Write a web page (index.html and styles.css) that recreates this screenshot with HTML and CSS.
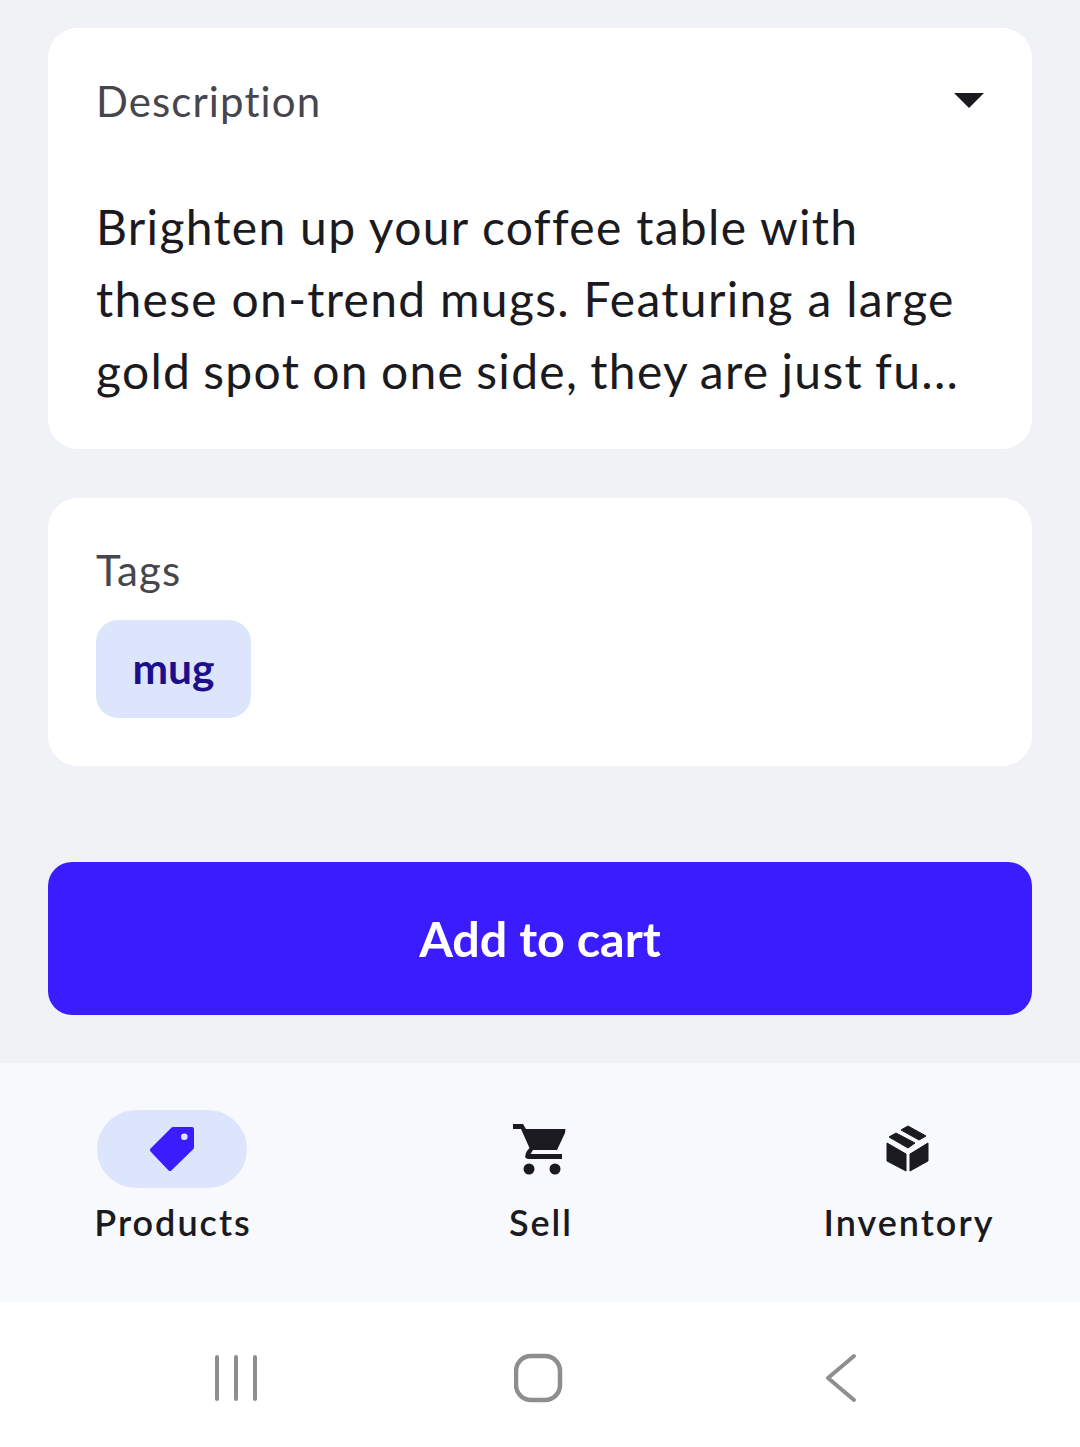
FILE: index.html
```html
<!DOCTYPE html>
<html lang="en">
<head>
  <meta charset="UTF-8" />
  <title>Product</title>
  <link rel="stylesheet" href="styles.css">
</head>
<body>
  <main class="content">
    <section class="card card-description">
      <div class="card-head">
        <h2 class="card-label">Description</h2>
        <svg class="caret" width="32" height="18" viewBox="0 0 32 18"><path d="M2 1h30L17 16z" fill="#1a1a20"/></svg>
      </div>
      <p class="description">Brighten up your coffee table with these on-trend mugs. Featuring a large <span class="description-end">gold spot on one side, they are just fu...</span></p>
    </section>

    <section class="card card-tags">
      <h2 class="card-label">Tags</h2>
      <span class="tag">mug</span>
    </section>

    <button class="btn-cart">Add to cart</button>
  </main>

  <nav class="tabs">
    <a class="tab">
      <span class="tab-icon tab-icon-active">
        <svg width="48" height="48" viewBox="0 0 48 48">
          <path fill="#3b1cff" stroke="#3b1cff" stroke-width="4" stroke-linejoin="round" d="M25 4H44V22.500L22 44L4 25z"/>
          <circle cx="36.300" cy="11.700" r="3.300" fill="#dce5fb"/>
        </svg>
      </span>
      <span class="tab-label">Products</span>
    </a>
    <a class="tab">
      <span class="tab-icon">
        <svg width="56" height="56" viewBox="0 0 56 56">
          <path fill="#1a1a20" d="M1 3H11L14 8H53.500L53 12L45 29H21L18.500 33H50V38H16Q11 37 15 30L17.500 27L9 8H1z"/>
          <circle cx="17" cy="48" r="5.500" fill="#1a1a20"/>
          <circle cx="43" cy="48" r="5.500" fill="#1a1a20"/>
        </svg>
      </span>
      <span class="tab-label">Sell</span>
    </a>
    <a class="tab">
      <span class="tab-icon">
        <svg width="48" height="56" viewBox="0 -4 48 56">
          <g fill="#1a1a20" stroke="#1a1a20" stroke-width="1" stroke-linejoin="round">
            <path d="M3 18L22 29V46L3 36z"/>
            <path d="M26 29L44 18V36L26 46z"/>
            <path d="M5 12L12 8L31 18L24 23z"/>
            <path d="M17 5L24 1L42 11L35 15z"/>
          </g>
        </svg>
      </span>
      <span class="tab-label">Inventory</span>
    </a>
  </nav>

  <footer class="sysbar">
    <svg width="50" height="50" viewBox="0 0 50 50">
      <path d="M6 4V46M25 4V46M44 4V46" stroke="#8e8e8e" stroke-width="4" stroke-linecap="round" fill="none"/>
    </svg>
    <svg width="50" height="50" viewBox="0 0 50 50">
      <rect x="2" y="3" width="44" height="44" rx="15" stroke="#8e8e8e" stroke-width="4.500" fill="none"/>
    </svg>
    <svg width="50" height="50" viewBox="0 0 50 50">
      <path d="M38 3L12 25L38 47" stroke="#8e8e8e" stroke-width="4" stroke-linecap="round" stroke-linejoin="round" fill="none"/>
    </svg>
  </footer>
</body>
</html>
```

FILE: styles.css
```css
html, body {
  margin: 0;
  padding: 0;
}
body {
  font-family: Lato, "Liberation Sans", sans-serif;
  background-color: #f1f2f6;
  width: 1080px;
  height: 1447px;
  overflow: hidden;
  display: flex;
  flex-direction: column;
}
.content {
  padding: 28px 48px 48px;
  display: flex;
  flex-direction: column;
}
.card {
  background-color: #fff;
  border-radius: 30px;
  padding: 48px;
  box-sizing: border-box;
}
.card-description {
  height: 421px;
}
.card-head {
  display: flex;
  justify-content: space-between;
  align-items: flex-start;
}
.caret {
  margin-top: 16px;
}
.card-label {
  margin: 0;
  font-size: 42px;
  line-height: 50px;
  font-weight: 400;
  letter-spacing: 1.100px;
  color: #46464c;
}
.description {
  margin: 65px 0 0;
  font-size: 48px;
  line-height: 72px;
  letter-spacing: 1.300px;
  color: #1a1a20;
}
.description-end {
  word-spacing: -1.500px;
}
.card-tags {
  margin-top: 49px;
  height: 268px;
  padding-top: 47px;
}
.tag {
  display: inline-block;
  margin-top: 25px;
  padding: 0 36.500px;
  height: 98px;
  line-height: 96px;
  background-color: #dce5fb;
  border-radius: 22px;
  font-size: 42.500px;
  font-weight: 700;
  color: #1d0f8c;
}
.btn-cart {
  margin-top: 96px;
  height: 153px;
  padding-bottom: 3px;
  border: none;
  border-radius: 24px;
  background-color: #3b1cff;
  color: #fff;
  font-family: inherit;
  font-size: 48.500px;
  font-weight: 700;
  cursor: pointer;
}
.tabs {
  height: 239px;
  background-color: #f8f9fd;
  display: flex;
  justify-content: space-between;
  box-sizing: border-box;
  padding: 47px 88px 0;
}
.tab {
  width: 168px;
  display: flex;
  flex-direction: column;
  align-items: center;
}
.tab-icon {
  width: 150px;
  height: 78px;
  border-radius: 39px;
  display: flex;
  align-items: center;
  justify-content: center;
}
.tab-icon-active {
  background-color: #dce5fb;
}
.tab-label {
  margin-top: 12px;
  padding-left: 2px;
  font-size: 36px;
  line-height: 44px;
  font-weight: 600;
  letter-spacing: 2px;
  white-space: nowrap;
  color: #1a1a20;
}
.sysbar {
  flex: 1;
  background-color: #fff;
  display: flex;
  gap: 252.500px;
  padding: 51px 0 0 211px;
}
```
